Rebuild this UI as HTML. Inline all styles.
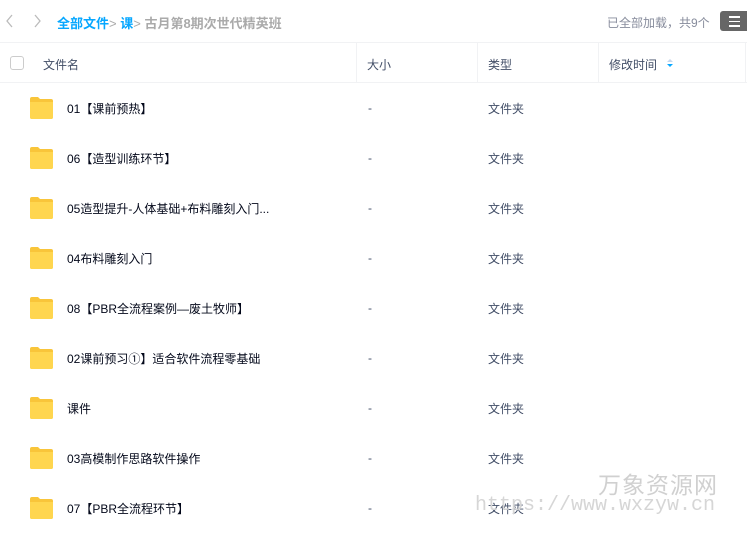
<!DOCTYPE html>
<html><head><meta charset="utf-8"><style>
*{margin:0;padding:0;box-sizing:border-box}
body{width:747px;height:540px;overflow:hidden;background:#fff;font-family:"Liberation Sans","Noto Sans CJK SC",sans-serif;font-size:12px;color:#424e67;position:relative}
.top{position:absolute;top:0;left:0;width:747px;height:42px}
.bc{position:absolute;left:57px;top:13px;font-size:13px;font-weight:bold;color:#06a7ff}
.bc .g{color:#aaa;font-weight:bold}
.cnt{position:absolute;left:607px;top:14px;font-size:12px;color:#878c9c}
.menu{position:absolute;left:720px;top:11px;width:30px;height:20px;background:#666;border-radius:3px}
.menu i{position:absolute;left:9px;width:11px;height:1.5px;background:#fff}
.hdr{position:absolute;top:42px;left:0;width:747px;height:41px;border-top:1px solid #f1f2f4;border-bottom:1px solid #f1f2f4}
.hdr span{position:absolute;top:13px;color:#424e67}
.sep{position:absolute;top:0;width:1px;height:40px;background:#f1f2f4}
.cb{position:absolute;left:10px;top:13px;width:14px;height:14px;border:1px solid #ccc;border-radius:3px}
.row{position:absolute;left:0;width:747px;height:50px}
.fd{position:absolute;left:29px;top:14px;width:25px;height:22px}
.nm{position:absolute;left:67px;top:17px;color:#03081a}
.sz{position:absolute;left:368px;top:18px;color:#424e67}
.tp{position:absolute;left:488px;top:17px;color:#424e67}
.wm1{position:absolute;left:598px;top:466px;font-size:23px;color:#d0d0d0;letter-spacing:1px}
.wm2{position:absolute;left:475px;top:494px;font-size:20px;color:#d6d6d6;font-family:"Liberation Mono",monospace}
</style></head><body>
<div class="top">
<svg style="position:absolute;left:5px;top:14px" width="10" height="14"><path d="M7 1L2 7l5 6" stroke="#bbb" stroke-width="1.3" fill="none"/></svg>
<svg style="position:absolute;left:33px;top:14px" width="10" height="14"><path d="M2 1l5 6-5 6" stroke="#bbb" stroke-width="1.3" fill="none"/></svg>
<div class="bc">全部文件<span class="g" style="font-weight:normal">&gt;</span> 课<span class="g" style="font-weight:normal">&gt;</span> <span class="g">古月第8期次世代精英班</span></div>
<div class="cnt">已全部加载，共9个</div>
<div class="menu"><i style="top:5px"></i><i style="top:9.5px"></i><i style="top:14px"></i></div>
</div>
<div class="hdr">
<div class="cb"></div>
<span style="left:43px">文件名</span>
<div class="sep" style="left:356px"></div><span style="left:367px">大小</span>
<div class="sep" style="left:477px"></div><span style="left:488px">类型</span>
<div class="sep" style="left:598px"></div><span style="left:609px">修改时间</span>
<svg style="position:absolute;left:667px;top:15px" width="6" height="10"><path d="M0 4L3 1 6 4z" fill="#c5d8ee"/><path d="M0 6L3 9 6 6z" fill="#06a7ff"/></svg>
<div class="sep" style="left:745px"></div>
</div>
<div id="rows"></div>
<script>
var n=["01【课前预热】","06【造型训练环节】","05造型提升-人体基础+布料雕刻入门...","04布料雕刻入门","08【PBR全流程案例—废土牧师】","02课前预习①】适合软件流程零基础","课件","03高模制作思路软件操作","07【PBR全流程环节】"];
var h="";for(var i=0;i<n.length;i++){h+='<div class="row" style="top:'+(83+i*50)+'px"><svg class="fd" viewBox="0 0 25 22"><path d="M1 2Q1 0 3 0H9L11 2H22Q24 2 24 4V20Q24 22 22 22H3Q1 22 1 20Z" fill="#f9c53a"/><path d="M1 5H24V20Q24 22 22 22H3Q1 22 1 20Z" fill="#ffd64f"/></svg><span class="nm">'+n[i]+'</span><span class="sz">-</span><span class="tp">文件夹</span></div>';}
document.getElementById("rows").innerHTML=h;
</script>
<div class="wm1">万象资源网</div>
<div class="wm2">https://www.wxzyw.cn</div>
</body></html>
